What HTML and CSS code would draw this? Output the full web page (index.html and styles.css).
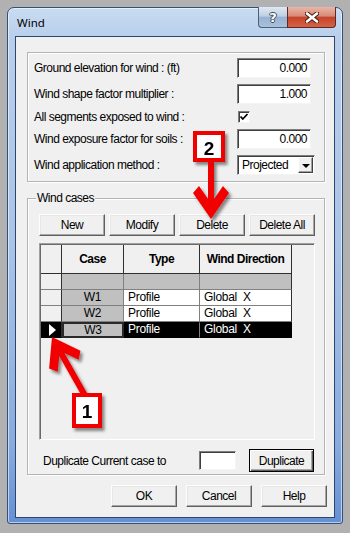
FILE: index.html
```html
<!DOCTYPE html>
<html lang="en">
<head>
  <meta charset="UTF-8" />
  <meta name="viewport" content="width=device-width, initial-scale=1.0" />
  <title>Wind</title>
  <link rel="stylesheet" href="styles.css">
</head>
<body>
  <div class="window">
    <div class="titlebar">
      <span class="title">Wind</span>
      <div class="caption-btns">
        <div class="cap-btn help-btn">?</div>
        <div class="cap-btn close-btn">
          <svg width="14" height="11" viewBox="0 0 14 11">
            <path d="M2 1.5 L12 9.5 M12 1.5 L2 9.5" stroke="#4a1e16" stroke-width="4.6" stroke-linecap="round"/>
            <path d="M2 1.5 L12 9.5 M12 1.5 L2 9.5" stroke="#fff" stroke-width="2.6" stroke-linecap="round"/>
          </svg>
        </div>
      </div>
    </div>

    <div class="client">
      <div class="group settings">
        <span class="label">Ground elevation for wind : (ft)</span>
        <div class="textbox">0.000</div>
        <span class="label">Wind shape factor multiplier :</span>
        <div class="textbox">1.000</div>
        <span class="label">All segments exposed to wind :</span>
        <div class="checkbox">
          <svg width="10" height="10" viewBox="0 0 10 10">
            <path d="M1.5 4.5 L3.8 7 L8.5 2" fill="none" stroke="#000" stroke-width="1.8"/>
          </svg>
        </div>
        <span class="label">Wind exposure factor for soils :</span>
        <div class="textbox">0.000</div>
        <span class="label">Wind application method :</span>
        <div class="combo">
          <span class="combo-text">Projected</span>
          <div class="combo-btn"><span class="down-tri"></span></div>
        </div>
      </div>

      <div class="group cases">
        <span class="group-title">Wind cases</span>
        <div class="case-btns">
          <button class="btn">New</button>
          <button class="btn">Modify</button>
          <button class="btn">Delete</button>
          <button class="btn">Delete All</button>
        </div>

        <div class="grid">
          <div class="grid-row head">
            <div class="cell rh"></div>
            <div class="cell c-case">Case</div>
            <div class="cell c-type">Type</div>
            <div class="cell c-dir">Wind Direction</div>
          </div>
          <div class="grid-row blank">
            <div class="cell rh"></div>
            <div class="cell c-case"></div>
            <div class="cell c-type"></div>
            <div class="cell c-dir"></div>
          </div>
          <div class="grid-row">
            <div class="cell rh"></div>
            <div class="cell c-case">W1</div>
            <div class="cell c-type">Profile</div>
            <div class="cell c-dir">Global&nbsp; X</div>
          </div>
          <div class="grid-row">
            <div class="cell rh"></div>
            <div class="cell c-case">W2</div>
            <div class="cell c-type">Profile</div>
            <div class="cell c-dir">Global&nbsp; X</div>
          </div>
          <div class="grid-row sel">
            <div class="cell rh"><span class="row-marker"></span></div>
            <div class="cell c-case">W3</div>
            <div class="cell c-type">Profile</div>
            <div class="cell c-dir">Global&nbsp; X</div>
          </div>
        </div>

        <div class="dup-row">
          <span class="label dup-label">Duplicate Current case to</span>
          <div class="textbox dup-input"></div>
          <button class="btn default">Duplicate</button>
        </div>
      </div>

      <div class="footer">
        <button class="btn">OK</button>
        <button class="btn">Cancel</button>
        <button class="btn">Help</button>
      </div>
    </div>
  </div>

  <!-- tutorial callouts drawn over the dialog -->
  <svg class="callouts" width="350" height="533" viewBox="0 0 350 533">
    <defs>
      <filter id="shadow" x="-40%" y="-40%" width="180%" height="180%">
        <feDropShadow dx="2.5" dy="3" stdDeviation="1.4" flood-color="#000" flood-opacity="0.45"/>
      </filter>
    </defs>
    <g filter="url(#shadow)">
      <path transform="translate(211 219)" fill="#f20000"
        d="M0 0 L-18 -26 L-12 -33 L-3 -20 L-3 -58 L3 -58 L3 -20 L12 -33 L18 -26 Z"/>
      <rect x="195" y="133" width="28" height="27" fill="#fff" stroke="#f20000" stroke-width="4"/>
      <text x="209" y="155" class="callout-num" text-anchor="middle">2</text>
    </g>
    <g filter="url(#shadow)">
      <path transform="translate(52 337) rotate(150.6)" fill="#f20000"
        d="M0 0 L-18 -26 L-12 -33 L-3 -20 L-3 -68 L3 -68 L3 -20 L12 -33 L18 -26 Z"/>
      <rect x="74" y="395" width="26" height="31" fill="#fff" stroke="#f20000" stroke-width="4"/>
      <text x="87" y="418" class="callout-num" text-anchor="middle">1</text>
    </g>
  </svg>
</body>
</html>
```

FILE: styles.css
```css
* {
  box-sizing: border-box;
}

body {
  margin: 0;
  width: 350px;
  height: 533px;
  padding: 7px 7px 0;
  background: #b1b1b1;
  font-family: "Liberation Sans", Arial, sans-serif;
  font-size: 12px;
  letter-spacing: -0.5px;
  color: #000;
  position: relative;
  overflow: hidden;
}

.window {
  width: 336px;
  height: 517px;
  border: 1px solid #33507a;
  border-radius: 7px 7px 3px 3px;
  background: linear-gradient(180deg, #c8dbf1 0, #b9cfeb 28px, #aac4e6 45%, #88abdd 85%, #6590d3 100%);
  box-shadow: inset 0 0 0 1px rgba(255,255,255,0.55);
  padding: 0 7px 5px;
}

.titlebar {
  height: 28px;
  display: flex;
  justify-content: space-between;
  align-items: flex-start;
}

.title {
  font-family: "Noto Sans", sans-serif;
  font-size: 11.5px;
  letter-spacing: 0;
  line-height: 16px;
  margin: 7px 0 0 2px;
}

.caption-btns {
  display: flex;
  margin: -1px -1px 0 0;
}

.cap-btn {
  height: 21px;
  display: flex;
  align-items: center;
  justify-content: center;
  border: 1px solid #4d6079;
  border-top: none;
}

.help-btn {
  width: 29px;
  border-right: none;
  border-radius: 0 0 0 4px;
  background: linear-gradient(180deg, #dde8f4 0, #bfd0e4 45%, #98b2d0 52%, #a8c0dc 100%);
  color: #fff;
  font-family: "DejaVu Sans", sans-serif;
  font-weight: bold;
  font-size: 13px;
  letter-spacing: 0;
  text-shadow: 1px 0 #3a4a60, -1px 0 #3a4a60, 0 1px #3a4a60, 0 -1px #3a4a60;
}

.close-btn {
  width: 49px;
  border-color: #5b2a22;
  border-radius: 0 0 4px 0;
  background: linear-gradient(180deg, #e9b6a8 0, #d98a76 45%, #c4442b 52%, #d66146 100%);
}

.client {
  height: 482px;
  background: #f0f0f0;
  border: 1px solid #2b4670;
  padding: 15px 9px 0 11px;
}

.group {
  border: 1px solid #b4b4b4;
  box-shadow: inset 1px 1px 0 #fff, 1px 1px 0 #fff;
}

.label {
  white-space: nowrap;
}

/* top settings block */
.settings {
  height: 130px;
  padding: 5px 9px 0 6px;
  display: grid;
  grid-template-columns: 1fr 78px;
  grid-template-rows: 20px 20px 13px 20px 20px;
  row-gap: 6px;
  align-items: center;
}

.textbox {
  width: 74px;
  height: 20px;
  background: #fff;
  border: 1px solid;
  border-color: #7d7d7d #f4f4f4 #f4f4f4 #7d7d7d;
  box-shadow: inset 1px 1px 0 #3f3f3f;
  text-align: right;
  padding-right: 3px;
  line-height: 18px;
}

.checkbox {
  width: 12px;
  height: 12px;
  margin-left: 1px;
  background: #fff;
  border: 1px solid;
  border-color: #7d7d7d #f4f4f4 #f4f4f4 #7d7d7d;
  box-shadow: inset 1px 1px 0 #3f3f3f;
  display: flex;
  align-items: center;
  justify-content: center;
}

.combo {
  width: 78px;
  height: 20px;
  background: #fff;
  border: 1px solid;
  border-color: #7d7d7d #f4f4f4 #f4f4f4 #7d7d7d;
  box-shadow: inset 1px 1px 0 #3f3f3f;
  display: flex;
  align-items: center;
  padding: 1px 1px 1px 4px;
}

.combo-text {
  flex: 1;
}

.combo-btn {
  width: 15px;
  height: 16px;
  background: #f0f0f0;
  border: 1px solid;
  border-color: #fff #404040 #404040 #fff;
  box-shadow: inset -1px -1px 0 #a0a0a0;
  display: flex;
  align-items: center;
  justify-content: center;
}

.down-tri {
  border-left: 4px solid transparent;
  border-right: 4px solid transparent;
  border-top: 4px solid #000;
  margin-top: 1px;
}

/* wind cases block */
.cases {
  position: relative;
  margin-top: 16px;
  height: 277px;
  padding: 15px 9px 0 11px;
}

.group-title {
  position: absolute;
  top: -8px;
  left: 8px;
  padding: 0 1px;
  line-height: 14px;
  background: #f0f0f0;
}

.case-btns {
  display: grid;
  grid-template-columns: repeat(4, 1fr);
  gap: 4px;
  height: 22px;
}

.btn {
  margin: 0;
  padding: 0;
  height: 22px;
  background: #f0f0f0;
  border: 1px solid;
  border-color: #fdfdfd #5f5f5f #5f5f5f #fdfdfd;
  box-shadow: inset -1px -1px 0 #a8a8a8, inset 1px 1px 0 #e6e6e6;
  font-family: "Liberation Sans", Arial, sans-serif;
  font-size: 12px;
  letter-spacing: -0.5px;
  color: #000;
}

.grid {
  margin-top: 7px;
  height: 197px;
  background: #f0f0f0;
  border: 1px solid;
  border-color: #a0a0a0 #fff #fff #a0a0a0;
  box-shadow: inset 1px 1px 0 #6a6a6a;
  padding: 1px 0 0 1px;
}

.grid-row {
  display: flex;
  height: 16px;
}

.cell {
  height: 100%;
  border-right: 1px solid #808080;
  border-bottom: 1px solid #808080;
  line-height: 15px;
  padding: 0 4px;
  white-space: nowrap;
  overflow: hidden;
  letter-spacing: -0.3px;
}

.rh {
  width: 21px;
  padding: 0;
  background: #f0f0f0;
  border-right-color: #303030;
}

.c-case {
  width: 62px;
  background: #c0c0c0;
  text-align: center;
}

.c-type {
  width: 76px;
  background: #fff;
}

.c-dir {
  width: 92px;
  background: #fff;
  border-right-color: #303030;
}

.head {
  height: 29px;
}

.head .cell {
  background: #f0f0f0;
  border-color: #303030;
  font-weight: bold;
  letter-spacing: -0.5px;
  display: flex;
  align-items: center;
  justify-content: center;
}

.blank .c-type,
.blank .c-dir {
  background: #c0c0c0;
}

.sel .rh {
  background: #000;
  border-bottom-color: #000;
}

.row-marker {
  display: block;
  margin: 2px 0 0 8px;
  border-top: 6px solid transparent;
  border-bottom: 6px solid transparent;
  border-left: 7px solid #fff;
  width: 0;
}

.sel .c-case {
  border: 2px solid #2a2a2a;
  line-height: 12px;
}

.sel .c-type,
.sel .c-dir {
  background: #000;
  color: #fff;
  border-color: #000;
  border-top: 1px solid #000;
  line-height: 13px;
}

.sel .c-type {
  border-right-color: #808080;
}

.dup-row {
  margin-top: 9px;
  height: 23px;
  display: flex;
  align-items: center;
}

.dup-label {
  flex: 1;
  padding-left: 4px;
}

.dup-input {
  width: 37px;
  height: 19px;
  margin-right: 13px;
}

.btn.default {
  width: 65px;
  height: 23px;
  margin-right: 1px;
  border: 1px solid #000;
  box-shadow: inset 1px 1px 0 #fff, inset -1px -1px 0 #5f5f5f, inset -2px -2px 0 #a8a8a8;
}

.footer {
  margin: 10px -2px 0 0;
  display: flex;
  justify-content: flex-end;
  gap: 9px;
}

.footer .btn {
  width: 66px;
}

.callouts {
  position: absolute;
  top: 0;
  left: 0;
  pointer-events: none;
}

.callout-num {
  font-family: "Liberation Sans", Arial, sans-serif;
  font-weight: bold;
  font-size: 19px;
  letter-spacing: 0;
  fill: #000;
}
```
